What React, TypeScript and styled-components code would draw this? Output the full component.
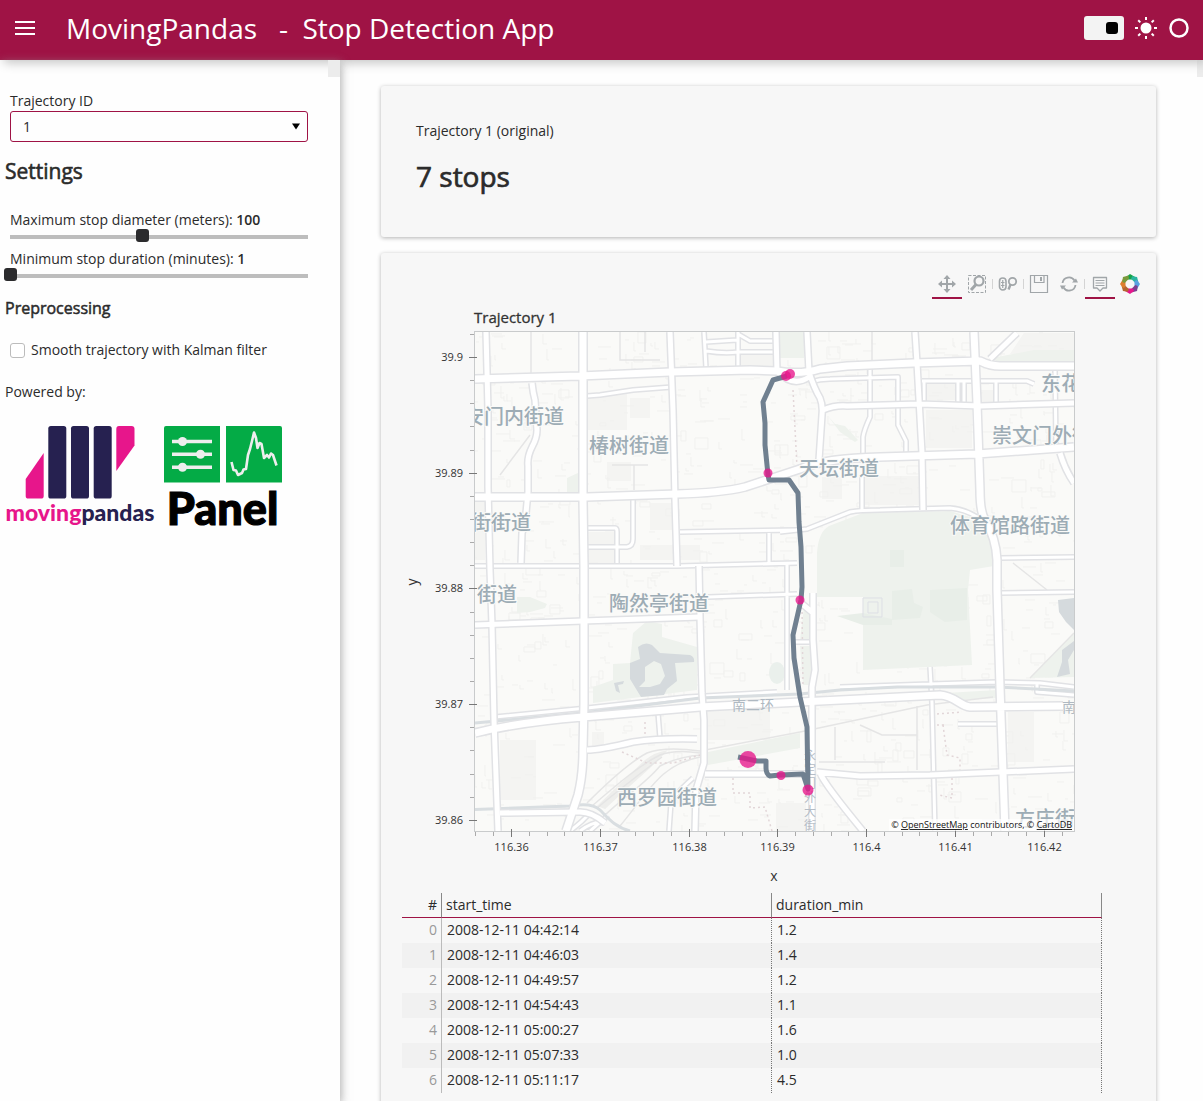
import React, { useState } from "react";
import styled, { createGlobalStyle } from "styled-components";

const ACCENT = "#9f1345";
const INK = "#2b2b2b";
const PINK = "#e7168b";
const NAVY = "#262150";
const FONT = '"Open Sans", "Noto Sans CJK SC", sans-serif';

const GlobalStyle = createGlobalStyle`
  *, *::before, *::after { box-sizing: border-box; }
  body { margin: 0; background: #fefefe; color: ${INK}; font: 14px/20px ${FONT}; }
  h1, h2, h3, p { margin: 0; }
`;

const Page = styled.div`
  display: flex;
  flex-direction: column;
  height: 100vh;
  overflow: hidden;
`;

const Header = styled.header`
  position: relative;
  z-index: 2;
  flex: none;
  display: flex;
  align-items: center;
  height: 60px;
  padding: 0 13px 4px 15px;
  background: ${ACCENT};
  color: #fff;
  box-shadow: 4px 3px 10px #c4c4c4;
`;

const IconButton = styled.button`
  display: flex;
  padding: 0;
  border: 0;
  background: none;
  color: inherit;
`;

const Title = styled.h1`
  flex: 1;
  margin-left: 31px;
  font-size: 28px;
  line-height: 40px;
  font-weight: 400;
  white-space: pre;
`;

const HeaderTools = styled.div`
  display: flex;
  align-items: center;
  gap: 11px;
`;

const Switch = styled.input`
  appearance: none;
  display: flex;
  align-items: center;
  width: 40px;
  height: 24px;
  margin: 0;
  padding: 0 6px;
  border-radius: 3px;
  background: #f3f3f3;
  &::before {
    content: "";
    width: 12px;
    height: 12px;
    border-radius: 3px;
    background: #000;
  }
  &:checked { justify-content: flex-end; }
`;

const Body = styled.div`
  flex: 1;
  display: flex;
  min-height: 0;
`;

const Sidebar = styled.aside`
  position: relative;
  z-index: 3;
  flex: none;
  width: 340px;
  padding: 31px 32px 0 5px;
  box-shadow: 1px 3px 9px rgba(150, 150, 150, 0.8);
`;

const ScrollCorner = styled.span<{ $width: number }>`
  position: absolute;
  top: 0;
  right: 0;
  width: ${(p) => p.$width}px;
  height: 17px;
  background: #ececec;
`;

const Field = styled.div`
  display: flex;
  flex-direction: column;
  padding-left: 5px;
`;

const SelectBox = styled.div`
  position: relative;
  display: grid;
  svg { position: absolute; right: 8px; top: 12px; pointer-events: none; }
`;

const Select = styled.select`
  appearance: none;
  height: 31px;
  padding: 0 12px;
  border: 1px solid ${ACCENT};
  border-radius: 3px;
  background: #fefefe;
  color: ${INK};
  font: inherit;
`;

const SettingsTitle = styled.h2`
  margin: 16px 0 24px;
  font-size: 21px;
  line-height: 27px;
  font-weight: 500;
  -webkit-text-stroke: 0.6px;
`;

const SubTitle = styled.h3`
  margin: 16px 0 21px;
  font-size: 16px;
  line-height: 22px;
  font-weight: 500;
  -webkit-text-stroke: 0.5px;
`;

const Sliders = styled.div`
  display: flex;
  flex-direction: column;
  gap: 6px;
`;

const SliderLabel = styled.label`
  padding-top: 2px;
  line-height: 18px;
`;

const Range = styled.input`
  appearance: none;
  width: calc(100% + 12px);
  height: 13px;
  margin: 0 -6px;
  background: linear-gradient(#bdbdbd, #bdbdbd) 6px 6px / calc(100% - 12px) 4px no-repeat;
  &::-webkit-slider-thumb {
    appearance: none;
    width: 13px;
    height: 13px;
    border-radius: 3px;
    background: #2b2b2d;
  }
`;

const CheckRow = styled.label`
  display: flex;
  align-items: center;
  gap: 6px;
  padding-left: 5px;
`;

const Checkbox = styled.input`
  appearance: none;
  width: 15px;
  height: 15px;
  margin: 0;
  border: 1px solid #bcbcbc;
  border-radius: 3px;
  background: #fff;
  &:checked { background: ${ACCENT}; }
`;

const Powered = styled.p`
  margin: 22px 0 24px;
`;

const Logos = styled.div`
  display: flex;
  gap: 9px;
  svg { display: block; overflow: visible; }
`;

const Main = styled.main`
  position: relative;
  flex: 1;
  min-width: 0;
  display: flex;
  flex-direction: column;
  gap: 16px;
  padding: 26px 47px 24px 41px;
  overflow-y: auto;
  scrollbar-width: none;
`;

const Card = styled.section`
  flex: none;
  background: #f7f7f7;
  border-radius: 3px;
  box-shadow: 0 1px 4px rgba(0, 0, 0, 0.3);
`;

const SummaryCard = styled(Card)`
  padding: 35px 35px 41px;
`;

const Count = styled.h2`
  margin-top: 15px;
  font-size: 28px;
  line-height: 40px;
  font-weight: 500;
  -webkit-text-stroke: 0.7px;
`;

const PlotCard = styled(Card)`
  padding: 16px 11px 24px 21px;
`;

const Toolbar = styled.div`
  display: flex;
  justify-content: flex-end;
  align-items: center;
`;

const Tool = styled.button<{ $active?: boolean }>`
  display: flex;
  align-items: center;
  justify-content: center;
  width: 30px;
  height: 30px;
  padding: 2px 0 0;
  border: 0;
  border-bottom: 2px solid ${(p) => (p.$active ? ACCENT : "transparent")};
  background: none;
  color: #a1a6a9;
`;

const Divider = styled.span`
  width: 1px;
  height: 10px;
  background: #d4d4d4;
`;

const Figure = styled.figure`
  max-width: 700px;
  margin: 6px 0 0;
`;

const Chart = styled.svg`
  display: block;
  width: 100%;
  font-family: ${FONT};
  fill: #333;
  .title { font-size: 15px; font-weight: 500; stroke: #333; stroke-width: 0.3px; }
  .tick { font-size: 11px; }
  .axis { font-size: 14px; }
  .credit { font-size: 9px; fill: #111; }
  .credit a { fill: #111; text-decoration: underline; }
  .place { font: 500 20px "Noto Sans CJK SC", sans-serif; fill: #9dacb5; stroke: #fafaf8; stroke-width: 2px; paint-order: stroke; }
  .street { font: 14px "Noto Sans CJK SC", sans-serif; fill: #afb9c2; }
  .avenue { font: 12px "Noto Sans CJK SC", sans-serif; fill: #b4bcc6; }
`;

const Table = styled.table`
  width: 100%;
  max-width: 700px;
  border-collapse: separate;
  border-spacing: 0;
  table-layout: fixed;
`;

const HeadCell = styled.th<{ $index?: boolean }>`
  width: ${(p) => (p.$index ? "40px" : "auto")};
  height: 25px;
  padding: 0 4px;
  border-right: 1px solid #888;
  border-bottom: 1px solid ${ACCENT};
  font-weight: 400;
  text-align: ${(p) => (p.$index ? "right" : "left")};
`;

const Row = styled.tr`
  &:nth-child(even) { background: #f1f1f1; }
`;

const Cell = styled.td<{ $index?: boolean }>`
  height: 25px;
  padding: 0 4px 2px 5px;
  border-right: 1px ${(p) => (p.$index ? "solid #bbb" : "dotted #777")};
  color: ${(p) => (p.$index ? "#999" : INK)};
  text-align: ${(p) => (p.$index ? "right" : "left")};
`;

/* Land cover, in chart coordinates */
const parks = [
  "M817 553 C818 538 822 530 829 526 L863 513 L950 511 L977 519 L990 540 L994 566 L970 570 L968 590 L972 665 L863 670 L863 597 L817 597Z",
  "M780 332 H804 V358 H780Z",
  "M633 633 L647 621 L662 624 L662 637 L697 647 V690 L593 703 V687 L613 680 V664 L630 663Z",
  "M567 478 L580 472 V492 H567Z",
  "M517 597 L530 597 L547 604 L545 608 L530 612 L517 613Z",
  "M804 607 L812 613 V640 H800Z M800 646 H813 L810 685 H803Z",
  "M1030 678 L1074 633 V677Z",
  "M945 693 L998 690 V698 L962 700Z",
  "M708 752 L800 733 V748 L708 765Z",
  "M992 358 L1034 350 H1074 V364 L1000 364Z",
  "M828 416 L835 424 L845 426 L858 440 L855 442 L840 432Z",
];
const woods = [
  "M890 550 H904 V567 H890Z",
  "M892 591 L912 589 L914 603 L923 607 L920 618 L892 620Z",
  "M930 590 L967 588 V620 L945 622 L930 612Z",
  "M837 616 L863 613 L892 619 V625 H863Z",
];
const waters = [
  "M638 647 Q645 641 652 645 L660 653 L690 655 Q695 657 694 662 L675 663 L677 681 L667 689 L664 695 L641 697 L630 679 L630 663 L640 659Z M645 667 L645 681 L639 687 L650 687 L660 684 L665 676 L661 664 L654 661Z",
  "M614 683 L624 681 L623 684 L618 685 L620 693 L616 691Z",
  "M1058 600 L1074 598 V630 L1066 622 L1059 612Z",
  "M1057 677 L1062 662 V650 L1074 641 V650 L1068 660 L1070 674Z",
];
const built = [
  "M587 397 L627 392 V430 H587Z", "M630 398 H650 V418 H630Z", "M740 354 H774 V366 H740Z",
  "M588 532 H614 V545 H588Z", "M588 550 H614 V563 H588Z", "M607 462 H631 V481 H607Z",
  "M650 503 H672 V530 H650Z", "M926 410 H972 V448 H926Z", "M864 476 H920 V505 H864Z",
  "M1024 333 H1074 V354 H1010Z", "M500 740 H536 V800 H500Z", "M475 500 H485 V560 H475Z",
  "M776 803 H806 V831 H776Z", "M1008 712 H1034 V762 H1008Z", "M592 732 H604 V746 H592Z",
  "M924 384 H956 V400 H924Z", "M980 390 H994 V403 H980Z", "M700 704 H770 V740 H706Z",
  "M652 545 H672 V560 H652Z", "M640 545 L700 545 V560 H640Z", "M822 477 H842 V499 H822Z",
];
const rails = [
  "M475 723 L583 713 L700 698 L800 694 L840 690 L897 687 L997 687 L1074 691",
  "M475 809.5 L570 806 Q592 802 600 810 C608 818 615 827 630 831",
];
const sidings = [
  "M587 803 C610 780 630 762 647 753 Q665 746 700 751 L800 732 L927 705 L993 697",
  "M592 806 C620 782 640 765 660 755 Q675 749 700 753",
  "M597 808 C625 785 645 770 662 757",
  "M590 831 C610 805 640 790 660 766 Q680 756 702 755",
  "M620 826 C650 790 660 765 700 757",
  "M531 332 V374", "M872 332 V362", "M1013 563 L1047 590", "M1030 678 L1074 633",
  "M860 725 L882 735 H917 M835 727 V760 M819 762 H885 M917 706 V770",
  "M645 332 V352 M620 332 V360 H660 M530 435 L500 475 M612 465 H648 M634 465 V490",
];
const minorRoads = [
  "M587 396 L600 395 L633 390 L672 387", "M475 566 H677 L797 563", "M680 532 L797 530",
  "M769 533 V563 M787 563 V690", "M588 528 H615 Q617 528 617 532 V563",
  "M588 547 H627 Q633 546 633 539 V500", "M704 332 L706 368 M738 332 V368",
  "M706 342 L737 340 M738 334 L750 341 H774 M706 351 Q725 354 738 352 H776",
  "M870 366 L870 417 Q864 430 863 437 V455 M862 477 V510",
  "M810 382 Q820 379 830 379 L898 377 V425 L906 441 V453",
  "M922 381 H1027 L1034 384", "M924 381 V404 M958 381 V404 M964 381 V404 M996 381 V405",
  "M1055 368 L1056 447", "M780 532 L807 529 L850 512 Q860 510 880 510 L950 508 Q964 509 977 517",
  "M1000 558 L1074 557 M1000 593 L1074 592", "M708 597 L797 594",
  "M840 687 L930 684 L997 682 L1040 683 L1074 687 M1037 683 V692 L1074 695",
  "M495 717 L587 708 L687 697 L777 692", "M658 713 L660 738", "M930 667 L932 703 L935 831",
  "M958 724 H998", "M669 831 L671 803 Q672 797 693 778", "M795 642 H814",
  "M580 831 Q595 820 605 823 M570 831 Q582 822 590 813 M590 831 L608 815",
];
const localRoads = [
  "M532 383 Q533 393 535 400 L537 430 Q537 438 532 447 Q527 457 528 466 V492 L526 513 Q525 525 522 533 L521 563",
  "M776 332 L777 372", "M807 332 L809 372 Q814 388 820 398 Q823 405 822 415 L819 460",
  "M915 332 L917 363 L922 453 L923 510", "M1017 333 L990 359", "M1060 453 Q1065 470 1074 483",
  "M823 410 Q835 405 847 406 L920 404 L980 406 L1074 403", "M475 625 L583 621 L700 617",
  "M587 750 Q600 750 633 742 Q660 738 697 739", "M705 774 H808 M817 772 L860 776 L930 775 L1074 769",
  "M820 773 Q825 785 863 831", "M500 813 L580 812 Q592 812 605 823",
  "M813 593 V640 L815 670 L812 687 V831", "M813 613 L801 603", "M777 371 Q793 388 809 377",
];
const arterials = [
  "M486 332 L488 410 L488 487 L490 570 L492 625 L494 720 L498 831",
  "M670 332 L673 410 L675 500 L677 566", "M699 566 L700 617 L702 693 L704 720 V763 L696 790 L695 831",
];
const highways = [
  "M583 332 L583 500 L584 567 L584 703 L583 750 Q583 775 578 795 L566 831",
  "M475 379 L580 376 L670 372 L750 370 L777 371 Q800 375 820 369 L847 366 L913 363 L980 361 Q990 366 1000 366 H1074",
  "M475 497 H587 L677 494 Q720 493 745 487 L800 469 Q825 458 880 457 L977 454 L1074 447",
  "M974 332 L977 403 L980 490 Q980 512 985 520 Q996 538 997 560 V590 L1000 687 L1005 831",
  "M475 733 Q520 722 583 717 L700 707 L800 702 L940 695 C955 696 960 706 970 707 L1063 706",
];
const footpaths = [
  "M793 390 L797 467", "M802 607 L803 687", "M937 714 L962 712", "M937 725 H947 M943 725 L947 755 L960 758 V770",
  "M952 778 V798 L939 795", "M622 752 L647 763 L673 763 L700 755",
  "M733 778 V793 H750 V808 L765 807 L772 831", "M645 722 V738",
];

const places: [string, number, number][] = [
  ["安门内街道", 464, 424], ["椿树街道", 589, 453], ["天坛街道", 799, 476], ["街街道", 471, 530],
  ["街道", 477, 602], ["陶然亭街道", 609, 611], ["西罗园街道", 617, 805], ["体育馆路街道", 950, 533],
  ["崇文门外街", 992, 443], ["东花", 1041, 391], ["方庄街", 1015, 826],
];

const trajectory =
  "M787 376 L773 380 L763 402 L765 423 L765 445 L768 475 L769 480 H789 L798 493 L799 522 L801 547 L802 587 L801 600 L793 635 L794 658 L800 697 L807 727 L808 789 L803 774 L780 775 L770 776 Q766 774 766 768 V761 H757 L738 757";
const stops = [
  [786, 376, 5], [790, 374, 5], [768, 473, 4.5], [800, 600, 4.5], [808, 790, 5.5], [781, 775.5, 4.5], [748, 759.5, 8.5],
];

/* Faint building outlines scattered over the city blocks */
function buildingOutlines() {
  let seed = 11;
  const next = () => (seed = (seed * 16807) % 2147483647) / 2147483647;
  let d = "";
  for (let i = 0; i < 1100; i++) {
    const x = Math.round(475 + next() * 600);
    const y = Math.round(332 + next() * 500);
    const w = Math.round(3 + next() * 11);
    const h = Math.round(3 + next() * 9);
    const kind = next();
    d += kind < 0.12 ? `M${x} ${y}h${w}v${h}h-${w}z` : kind < 0.65 ? `M${x} ${y}h${w}` : `M${x} ${y}v${h}h${Math.round(w / 3)}`;
  }
  return d;
}
const outlines = buildingOutlines();

const roadTiers = [
  { d: localRoads.join(" "), width: 5 },
  { d: arterials.join(" "), width: 5 },
  { d: highways.join(" "), width: 7 },
];

function Roads({ tiers }: { tiers: { d: string; width: number }[] }) {
  return (
    <g fill="none" strokeLinejoin="round">
      {tiers.map(({ d, width }) => (
        <path key={d} d={d} stroke="#e1e2e5" strokeWidth={width + 3} />
      ))}
      {tiers.map(({ d, width }) => (
        <path key={d} d={d} stroke="#fff" strokeWidth={width} />
      ))}
    </g>
  );
}

function CityMap() {
  return (
    <g clipPath="url(#frame)">
      <rect x={474} y={331} width={601} height={501} fill="#fafaf8" />
      <path d={built.join(" ")} fill="#f4f4f2" />
      <path d={outlines} fill="none" stroke="#f1f1ef" />
      <path d={parks.join(" ")} fill="#eef2ed" />
      <path d={woods.join(" ")} fill="#e8eee8" />
      <ellipse cx={777} cy={673} rx={8} ry={11} fill="#eaf0ec" />
      <path d="M863 598H882V617H863Z M868 602H878V613H868Z" fill="none" stroke="#dddfe5" />
      <path d={waters.join(" ")} fill="#d5dadd" fillRule="evenodd" />
      <path d="M597 806 L645 760 Q655 752 668 750 L650 768 L620 795 L605 809Z" fill="#eeeeec" />
      <path d={sidings.join(" ")} fill="none" stroke="#e5e5e5" strokeWidth={1.5} />
      <path d={footpaths.join(" ")} fill="none" stroke="#e2d6d8" strokeWidth={1.5} strokeDasharray="2 3" />
      <Roads tiers={[{ d: minorRoads.join(" "), width: 3 }]} />
      <path d={rails.join(" ")} fill="none" stroke="#d9dee1" strokeWidth={3} />
      <Roads tiers={roadTiers} />
      {places.map(([name, x, y]) => (
        <text key={name + y} className="place" x={x} y={y}>{name}</text>
      ))}
      <text className="street" x={732} y={710}>南二环</text>
      <text className="street" x={1062} y={712}>南</text>
      {[..."永定门外大街"].map((c, i) => (
        <text key={c} className="avenue" x={804} y={760 + i * 14}>{c}</text>
      ))}
      <path d={trajectory} fill="none" stroke="#708090" strokeWidth={5} strokeLinejoin="round" />
      {stops.map(([x, y, r]) => (
        <circle key={`${x}-${y}`} cx={x} cy={y} r={r} fill={PINK} fillOpacity={0.78} />
      ))}
    </g>
  );
}

function TrajectoryChart() {
  const yLabels = ["39.9", "39.89", "39.88", "39.87", "39.86"];
  const xLabels = ["116.36", "116.37", "116.38", "116.39", "116.4", "116.41", "116.42"];
  const yAt = (i: number) => Math.round(357 + i * 115.7) + 0.5;
  const xAt = (i: number) => Math.round(511 + i * 88.8) + 0.5;
  const minorY = Array.from({ length: 22 }, (_, i) => yAt((i - 1) / 5));
  const minorX = Array.from({ length: 34 }, (_, i) => xAt((i - 2) / 5)).filter((x) => x < 1074);
  return (
    <Chart viewBox="402 305 700 588" role="img" aria-label="Trajectory 1">
      <clipPath id="frame"><rect x={475} y={332} width={599} height={499} /></clipPath>
      <text className="title" x={474} y={323}>Trajectory 1</text>
      <CityMap />
      <rect x={474.5} y={331.5} width={600} height={500} fill="none" stroke="#c9cbcc" />
      <path
        d={minorY.map((y) => `M470 ${y}h4`).join("") + minorX.map((x) => `M${x} 832v4`).join("")}
        stroke="#aaa"
      />
      <path
        d={yLabels.map((_, i) => `M469 ${yAt(i)}h8`).join("") + xLabels.map((_, i) => `M${xAt(i)} 829v8`).join("")}
        stroke="#777"
      />
      {yLabels.map((t, i) => (
        <text key={t} className="tick" x={463} y={yAt(i) + 3.5} textAnchor="end">{t}</text>
      ))}
      {xLabels.map((t, i) => (
        <text key={t} className="tick" x={xAt(i)} y={851} textAnchor="middle">{t}</text>
      ))}
      <text className="axis" x={774} y={881} textAnchor="middle">x</text>
      <text className="axis" transform="translate(417 582) rotate(-90)" textAnchor="middle">y</text>
      <rect x={889} y={819} width={185} height={12} fill="#fff" fillOpacity={0.7} />
      <text className="credit" x={1072} y={828} textAnchor="end">
        © <a href="#osm">OpenStreetMap</a> contributors, © <a href="#carto">CartoDB</a>
      </text>
    </Chart>
  );
}

function MovingPandasLogo() {
  return (
    <svg width={150} height={100} viewBox="5 426 150 100" role="img" aria-label="movingpandas">
      <path d="M43.700 453V496Q43.700 498.600 41 498.600H28.500Q25.700 498.600 25.700 496V479Z" fill={PINK} />
      {[48.3, 71, 93.7].map((x) => (
        <rect key={x} x={x} y={426} width={18} height={72.6} rx={2.6} fill={NAVY} />
      ))}
      <path d="M116.300 471V429Q116.300 426 119 426H131.500Q134.500 426 134.500 429V445.500Z" fill={PINK} />
      <text x={80} y={521} textAnchor="middle" fontFamily="Lato, sans-serif" fontWeight={900} fontSize={23}>
        <tspan fill={PINK}>moving</tspan>
        <tspan fill={NAVY}>pandas</tspan>
      </text>
    </svg>
  );
}

function PanelLogo() {
  return (
    <svg width={118} height={100} viewBox="164 426 118 100" role="img" aria-label="Panel">
      <path d="M166 426H220V482.500H164V428Q164 426 166 426Z M226 426H280Q282 426 282 428V482.500H226Z" fill="#04ab46" />
      <path d="M172 441.500H212 M172 454.200H212 M172 467.200H212" stroke="#eee" strokeWidth={3.6} />
      <g fill="#eee">
        <circle cx={182.500} cy={441.500} r={4.5} />
        <circle cx={200.500} cy={454.200} r={4.5} />
        <circle cx={182.500} cy={467.200} r={4.5} />
      </g>
      <path
        d="M231.500 462L233.500 470L236 470.500L238 475L242 473L243.500 469.500L246 469L248 455L250 449L252 441L254 432.500L256 438L257.500 448L259.500 443L261.500 444L264 458L267 455L269 457.500L271 453.500L273 455L276.500 465.500"
        fill="none" stroke="#eee" strokeWidth={2.6} strokeLinejoin="round"
      />
      <text x={222.500} y={525} textAnchor="middle" fontFamily="Lato, sans-serif" fontWeight={900} fontSize={45} fill="#000" stroke="#000" strokeWidth={1.2}>
        Panel
      </text>
    </svg>
  );
}

const glyph = { width: 20, height: 20, viewBox: "0 0 20 20", fill: "none", stroke: "currentColor", strokeWidth: 1.6 };

const PanIcon = () => (
  <svg {...glyph}>
    <path d="M10 4V16M4 10H16" strokeWidth={2} />
    <path d="M10 1L13.500 5H6.500ZM10 19L13.500 15H6.500ZM1 10L5 6.500V13.500ZM19 10L15 6.500V13.500Z" fill="currentColor" stroke="none" />
  </svg>
);
const BoxZoomIcon = () => (
  <svg {...glyph}>
    <path d="M1.500 1.500H18.500V18.500H1.500Z" strokeWidth={1} strokeDasharray="3 1.500" />
    <circle cx={12} cy={7} r={4.5} fill="#f7f7f7" strokeWidth={2.2} />
    <path d="M9 10.500L4 16" strokeWidth={3} />
  </svg>
);
const WheelZoomIcon = () => (
  <svg {...glyph}>
    <rect x={1.500} y={4} width={6.500} height={12} rx={3.250} />
    <path d="M4.750 6V14M3 8.500H6.500M3 11.500H6.500" strokeWidth={1.2} />
    <circle cx={14.500} cy={7.500} r={3.700} strokeWidth={1.8} />
    <path d="M12.500 10.500L10.500 15.500" strokeWidth={2.4} />
  </svg>
);
const SaveIcon = () => (
  <svg {...glyph} strokeWidth={1.2}>
    <path d="M1.500 1.500H18.500V18.500H1.500Z M5.500 1.500V8.500H15V1.500" />
    <path d="M12 3V7" strokeWidth={2} />
  </svg>
);
const ResetIcon = () => (
  <svg {...glyph} strokeWidth={1.8}>
    <path d="M3.500 9A6.500 6.500 0 0 1 15.500 6.500M16.500 11A6.500 6.500 0 0 1 4.500 13.500" />
    <path d="M13 8.500H19L17 4.500ZM7 11.500H1L3 15.500Z" fill="currentColor" stroke="none" />
  </svg>
);
const HoverIcon = () => (
  <svg {...glyph} strokeWidth={1.3}>
    <path d="M3.500 3.500H16.500V14H13L10 17L7 14H3.500Z" strokeLinejoin="round" />
    <path d="M5.500 6.500H14.500M5.500 9H14.500M5.500 11.500H14.500" strokeWidth={1.2} />
  </svg>
);
const bokehColors = ["#16a34a", "#2bb5a0", "#5aa0e0", "#7d3f8f", "#e7168b", "#b5652f", "#dd7f2e", "#7a9a3c"];
const BokehIcon = () => (
  <svg width={20} height={20} viewBox="-10 -10 20 20">
    {bokehColors.map((c, i) => (
      <path key={c} d="M-4 -7L0 -10L5 -7L3 -4.500L-3 -4.500Z" fill={c} transform={`rotate(${i * 45})`} />
    ))}
  </svg>
);

const rows = [
  ["2008-12-11 04:42:14", "1.2"],
  ["2008-12-11 04:46:03", "1.4"],
  ["2008-12-11 04:49:57", "1.2"],
  ["2008-12-11 04:54:43", "1.1"],
  ["2008-12-11 05:00:27", "1.6"],
  ["2008-12-11 05:07:33", "1.0"],
  ["2008-12-11 05:11:17", "4.5"],
];

function Slider({ id, label, min, max, initial }: { id: string; label: string; min: number; max: number; initial: number }) {
  const [value, setValue] = useState(initial);
  return (
    <Field>
      <SliderLabel htmlFor={id}>{label}: <Strong>{value}</Strong></SliderLabel>
      <Range id={id} type="range" min={min} max={max} value={value} onChange={(e) => setValue(Number(e.target.value))} />
    </Field>
  );
}

const Strong = styled.b`
  font-weight: 600;
`;

export default function App() {
  return (
    <Page>
      <GlobalStyle />
      <Header>
        <IconButton aria-label="Toggle sidebar">
          <svg width={20} height={16} viewBox="0 0 20 16" stroke="#fff" strokeWidth={2}>
            <path d="M0 2H20M0 8H20M0 14H20" />
          </svg>
        </IconButton>
        <Title>{"MovingPandas\u00a0\u00a0 -\u00a0 Stop Detection App"}</Title>
        <HeaderTools>
          <Switch type="checkbox" defaultChecked aria-label="Theme" />
          <svg width={22} height={22} viewBox="-11 -11 22 22" stroke="#fff" strokeWidth={2}>
            <circle r={5.5} fill="#fff" stroke="none" />
            {[0, 45, 90, 135, 180, 225, 270, 315].map((a) => (
              <path key={a} d="M0 -8V-11" transform={`rotate(${a})`} />
            ))}
          </svg>
          <IconButton aria-label="Busy indicator">
            <svg width={22} height={22} viewBox="0 0 22 22">
              <circle cx={11} cy={11} r={8.5} fill="none" stroke="#fff" strokeWidth={2.5} />
            </svg>
          </IconButton>
        </HeaderTools>
      </Header>
      <Body>
        <Sidebar>
          <ScrollCorner $width={12} />
          <Field>
            <label htmlFor="trajectory">Trajectory ID</label>
            <SelectBox>
              <Select id="trajectory" defaultValue="1">
                <option>1</option>
                <option>2</option>
              </Select>
              <svg width={8} height={7} viewBox="0 0 8 7"><path d="M0 0.500H8L4 6.500Z" /></svg>
            </SelectBox>
          </Field>
          <SettingsTitle>Settings</SettingsTitle>
          <Sliders>
            <Slider id="diameter" label="Maximum stop diameter (meters)" min={20} max={200} initial={100} />
            <Slider id="duration" label="Minimum stop duration (minutes)" min={1} max={10} initial={1} />
          </Sliders>
          <SubTitle>Preprocessing</SubTitle>
          <CheckRow>
            <Checkbox type="checkbox" />
            Smooth trajectory with Kalman filter
          </CheckRow>
          <Powered>Powered by:</Powered>
          <Logos>
            <MovingPandasLogo />
            <PanelLogo />
          </Logos>
        </Sidebar>
        <Main>
          <ScrollCorner $width={6} />
          <SummaryCard>
            <p>Trajectory 1 (original)</p>
            <Count>7 stops</Count>
          </SummaryCard>
          <PlotCard>
            <Toolbar>
              <Tool $active aria-label="Pan"><PanIcon /></Tool>
              <Tool aria-label="Box zoom"><BoxZoomIcon /></Tool>
              <Divider />
              <Tool aria-label="Wheel zoom"><WheelZoomIcon /></Tool>
              <Divider />
              <Tool aria-label="Save"><SaveIcon /></Tool>
              <Tool aria-label="Reset"><ResetIcon /></Tool>
              <Divider />
              <Tool $active aria-label="Hover"><HoverIcon /></Tool>
              <Tool aria-label="Bokeh"><BokehIcon /></Tool>
            </Toolbar>
            <Figure><TrajectoryChart /></Figure>
            <Table>
              <thead>
                <tr>
                  <HeadCell $index>#</HeadCell>
                  <HeadCell>start_time</HeadCell>
                  <HeadCell>duration_min</HeadCell>
                </tr>
              </thead>
              <tbody>
                {rows.map(([start, minutes], i) => (
                  <Row key={start}>
                    <Cell $index>{i}</Cell>
                    <Cell>{start}</Cell>
                    <Cell>{minutes}</Cell>
                  </Row>
                ))}
              </tbody>
            </Table>
          </PlotCard>
        </Main>
      </Body>
    </Page>
  );
}
